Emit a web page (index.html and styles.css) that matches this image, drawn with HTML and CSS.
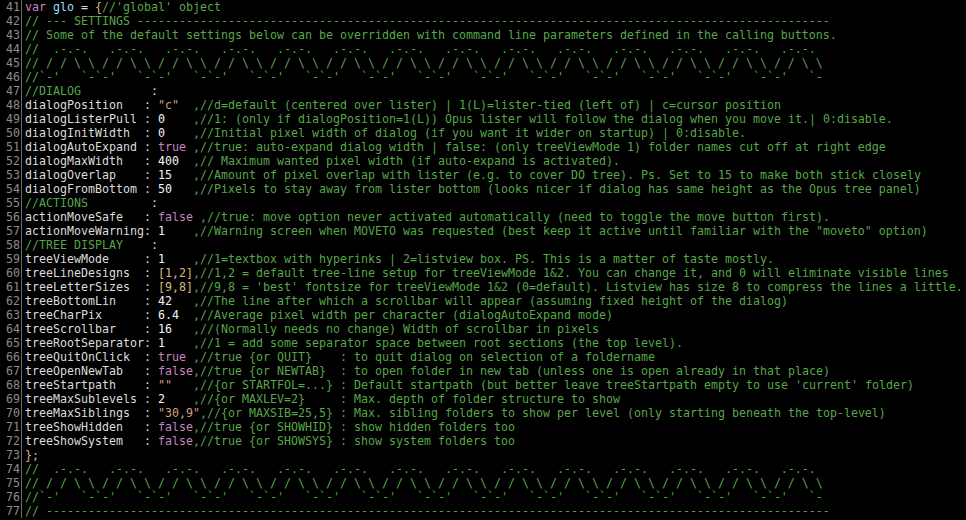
FILE: index.html
```html
<!DOCTYPE html>
<html>
<head>
<meta charset="utf-8">
<link rel="stylesheet" href="styles.css">
</head>
<body>
<div class="editor">
<div class="row"><span class="ln">41</span><span class="code"><span class="k">var</span> <span class="v">glo</span> = <span class="b">{</span><span class="c">//'global' object</span></span></div>
<div class="row"><span class="ln">42</span><span class="code"><span class="c">// --- SETTINGS ---------------------------------------------------------------------------------------------------</span></span></div>
<div class="row"><span class="ln">43</span><span class="code"><span class="c">// Some of the default settings below can be overridden with command line parameters defined in the calling buttons.</span></span></div>
<div class="row"><span class="ln">44</span><span class="code"><span class="c">//  .-.-.   .-.-.   .-.-.   .-.-.   .-.-.   .-.-.   .-.-.   .-.-.   .-.-.   .-.-.   .-.-.   .-.-.   .-.-.   .-.-.</span></span></div>
<div class="row"><span class="ln">45</span><span class="code"><span class="c">// / / \ \ / / \ \ / / \ \ / / \ \ / / \ \ / / \ \ / / \ \ / / \ \ / / \ \ / / \ \ / / \ \ / / \ \ / / \ \ / / \ \</span></span></div>
<div class="row"><span class="ln">46</span><span class="code"><span class="c">//`-'   `-`-'   `-`-'   `-`-'   `-`-'   `-`-'   `-`-'   `-`-'   `-`-'   `-`-'   `-`-'   `-`-'   `-`-'   `-`-'   `-</span></span></div>
<div class="row"><span class="ln">47</span><span class="code"><span class="c">//DIALOG</span>          :</span></div>
<div class="row"><span class="ln">48</span><span class="code"><span class="p">dialogPosition</span>   : <span class="s">"c"</span>  <span class="c">,//d=default (centered over lister) | 1(L)=lister-tied (left of) | c=cursor position</span></span></div>
<div class="row"><span class="ln">49</span><span class="code"><span class="p">dialogListerPull</span> : <span class="n">0</span>    <span class="c">,//1: (only if dialogPosition=1(L)) Opus lister will follow the dialog when you move it.| 0:disable.</span></span></div>
<div class="row"><span class="ln">50</span><span class="code"><span class="p">dialogInitWidth</span>  : <span class="n">0</span>    <span class="c">,//Initial pixel width of dialog (if you want it wider on startup) | 0:disable.</span></span></div>
<div class="row"><span class="ln">51</span><span class="code"><span class="p">dialogAutoExpand</span> : <span class="k">true</span> <span class="c">,//true: auto-expand dialog width | false: (only treeViewMode 1) folder names cut off at right edge</span></span></div>
<div class="row"><span class="ln">52</span><span class="code"><span class="p">dialogMaxWidth</span>   : <span class="n">400</span>  <span class="c">,// Maximum wanted pixel width (if auto-expand is activated).</span></span></div>
<div class="row"><span class="ln">53</span><span class="code"><span class="p">dialogOverlap</span>    : <span class="n">15</span>   <span class="c">,//Amount of pixel overlap with lister (e.g. to cover DO tree). Ps. Set to 15 to make both stick closely</span></span></div>
<div class="row"><span class="ln">54</span><span class="code"><span class="p">dialogFromBottom</span> : <span class="n">50</span>   <span class="c">,//Pixels to stay away from lister bottom (looks nicer if dialog has same height as the Opus tree panel)</span></span></div>
<div class="row"><span class="ln">55</span><span class="code"><span class="c">//ACTIONS</span>         :</span></div>
<div class="row"><span class="ln">56</span><span class="code"><span class="p">actionMoveSafe</span>   : <span class="k">false</span> <span class="c">,//true: move option never activated automatically (need to toggle the move button first).</span></span></div>
<div class="row"><span class="ln">57</span><span class="code"><span class="p">actionMoveWarning</span>: <span class="n">1</span>    <span class="c">,//Warning screen when MOVETO was requested (best keep it active until familiar with the "moveto" option)</span></span></div>
<div class="row"><span class="ln">58</span><span class="code"><span class="c">//TREE DISPLAY</span>    :</span></div>
<div class="row"><span class="ln">59</span><span class="code"><span class="p">treeViewMode</span>     : <span class="n">1</span>    <span class="c">,//1=textbox with hyperinks | 2=listview box. PS. This is a matter of taste mostly.</span></span></div>
<div class="row"><span class="ln">60</span><span class="code"><span class="p">treeLineDesigns</span>  : <span class="b">[1,2]</span><span class="c">,//1,2 = default tree-line setup for treeViewMode 1&amp;2. You can change it, and 0 will eliminate visible lines</span></span></div>
<div class="row"><span class="ln">61</span><span class="code"><span class="p">treeLetterSizes</span>  : <span class="b">[9,8]</span><span class="c">,//9,8 = 'best' fontsize for treeViewMode 1&amp;2 (0=default). Listview has size 8 to compress the lines a little.</span></span></div>
<div class="row"><span class="ln">62</span><span class="code"><span class="p">treeBottomLin</span>    : <span class="n">42</span>   <span class="c">,//The line after which a scrollbar will appear (assuming fixed height of the dialog)</span></span></div>
<div class="row"><span class="ln">63</span><span class="code"><span class="p">treeCharPix</span>      : <span class="n">6.4</span>  <span class="c">,//Average pixel width per character (dialogAutoExpand mode)</span></span></div>
<div class="row"><span class="ln">64</span><span class="code"><span class="p">treeScrollbar</span>    : <span class="n">16</span>   <span class="c">,//(Normally needs no change) Width of scrollbar in pixels</span></span></div>
<div class="row"><span class="ln">65</span><span class="code"><span class="p">treeRootSeparator</span>: <span class="n">1</span>    <span class="c">,//1 = add some separator space between root sections (the top level).</span></span></div>
<div class="row"><span class="ln">66</span><span class="code"><span class="p">treeQuitOnClick</span>  : <span class="k">true</span> <span class="c">,//true {or QUIT}    : to quit dialog on selection of a foldername</span></span></div>
<div class="row"><span class="ln">67</span><span class="code"><span class="p">treeOpenNewTab</span>   : <span class="k">false</span><span class="c">,//true {or NEWTAB}  : to open folder in new tab (unless one is open already in that place)</span></span></div>
<div class="row"><span class="ln">68</span><span class="code"><span class="p">treeStartpath</span>    : <span class="s">""</span>   <span class="c">,//{or STARTFOL=...} : Default startpath (but better leave treeStartpath empty to use 'current' folder)</span></span></div>
<div class="row"><span class="ln">69</span><span class="code"><span class="p">treeMaxSublevels</span> : <span class="n">2</span>    <span class="c">,//{or MAXLEV=2}     : Max. depth of folder structure to show</span></span></div>
<div class="row"><span class="ln">70</span><span class="code"><span class="p">treeMaxSiblings</span>  : <span class="s">"30,9"</span><span class="c">,//{or MAXSIB=25,5} : Max. sibling folders to show per level (only starting beneath the top-level)</span></span></div>
<div class="row"><span class="ln">71</span><span class="code"><span class="p">treeShowHidden</span>   : <span class="k">false</span><span class="c">,//true {or SHOWHID} : show hidden folders too</span></span></div>
<div class="row"><span class="ln">72</span><span class="code"><span class="p">treeShowSystem</span>   : <span class="k">false</span><span class="c">,//true {or SHOWSYS} : show system folders too</span></span></div>
<div class="row"><span class="ln">73</span><span class="code"><span class="b">};</span></span></div>
<div class="row"><span class="ln">74</span><span class="code"><span class="c">//  .-.-.   .-.-.   .-.-.   .-.-.   .-.-.   .-.-.   .-.-.   .-.-.   .-.-.   .-.-.   .-.-.   .-.-.   .-.-.   .-.-.</span></span></div>
<div class="row"><span class="ln">75</span><span class="code"><span class="c">// / / \ \ / / \ \ / / \ \ / / \ \ / / \ \ / / \ \ / / \ \ / / \ \ / / \ \ / / \ \ / / \ \ / / \ \ / / \ \ / / \ \</span></span></div>
<div class="row"><span class="ln">76</span><span class="code"><span class="c">//`-'   `-`-'   `-`-'   `-`-'   `-`-'   `-`-'   `-`-'   `-`-'   `-`-'   `-`-'   `-`-'   `-`-'   `-`-'   `-`-'   `-</span></span></div>
<div class="row"><span class="ln">77</span><span class="code"><span class="c">// ----------------------------------------------------------------------------------------------------------------</span></span></div>
</div>
</body>
</html>
```
FILE: styles.css
```css
html, body {
  margin: 0;
  padding: 0;
  background: #000000;
}
body {
  width: 966px;
  height: 520px;
  overflow: hidden;
}
.editor {
  display: flex;
  flex-direction: column;
  font-family: "DejaVu Sans Mono", "Liberation Mono", monospace;
  font-size: 11.63px;
  line-height: 14px;
  color: #dcdcdc;
}
.row {
  display: flex;
  height: 14px;
}
.ln {
  width: 20px;
  padding-right: 1px;
  text-align: right;
  color: #8c8c8c;
  flex: none;
}
.code {
  border-left: 1px solid #6a6a6a;
  padding-left: 3px;
  white-space: pre;
  flex: 1;
}
.c { color: #57a64a; }
.k { color: #c586c0; }
.v { color: #9cdcfe; }
.p { color: #dcdcdc; }
.n { color: #f4f4f4; }
.s { color: #d69d85; }
.b { color: #d7ba7d; }
```
